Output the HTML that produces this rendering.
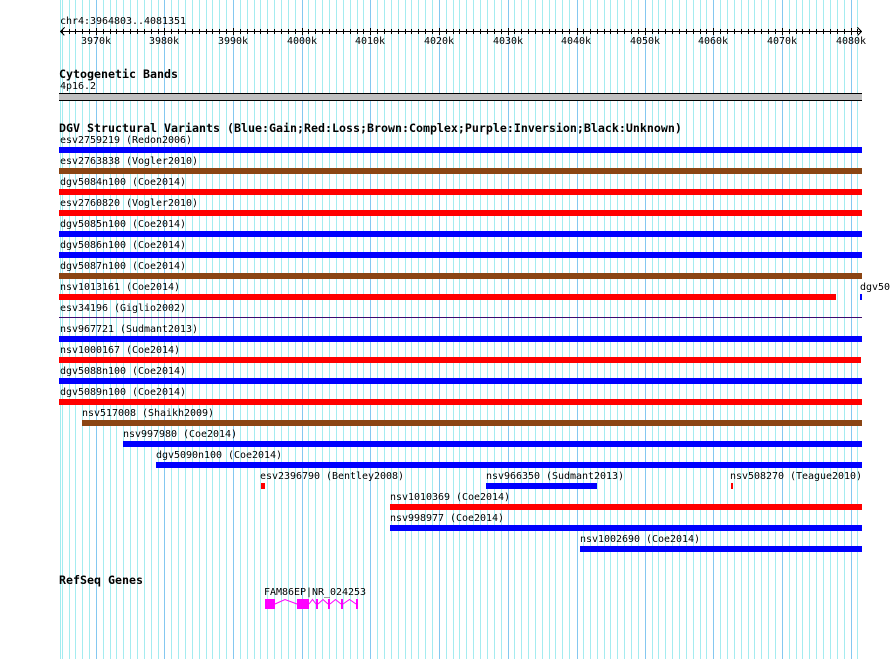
<!DOCTYPE html>
<html>
<head>
<meta charset="utf-8">
<style>
html,body{margin:0;padding:0;background:#fff}
#p{position:relative;width:890px;height:659px;overflow:hidden;background:#fff}
svg{position:absolute;left:0;top:0}
.t,.b{position:absolute;white-space:pre;color:#000;font-family:"DejaVu Sans Mono","Liberation Mono",monospace}
.t{font-size:10px;line-height:12px;height:12px;letter-spacing:-0.02px}
.b{font-size:11.63px;line-height:13px;height:13px;font-weight:bold}
.r{position:absolute;height:6px}
.u{background:#00f}.e{background:#f00}.o{background:#8b4513}
</style>
</head>
<body>
<div id="p">
<svg width="890" height="659" viewBox="0 0 890 659" shape-rendering="crispEdges" fill="none">
<defs>
<path id="m" d="M62 0V659M69 0V659M75 0V659M82 0V659M89 0V659M103 0V659M110 0V659M116 0V659M123 0V659M130 0V659M137 0V659M144 0V659M151 0V659M158 0V659M171 0V659M178 0V659M185 0V659M192 0V659M199 0V659M206 0V659M212 0V659M219 0V659M226 0V659M240 0V659M247 0V659M254 0V659M260 0V659M267 0V659M274 0V659M281 0V659M288 0V659M295 0V659M308 0V659M315 0V659M322 0V659M329 0V659M336 0V659M343 0V659M350 0V659M357 0V659M363 0V659M377 0V659M384 0V659M391 0V659M398 0V659M405 0V659M411 0V659M418 0V659M425 0V659M432 0V659M446 0V659M453 0V659M459 0V659M466 0V659M473 0V659M480 0V659M487 0V659M494 0V659M501 0V659M514 0V659M521 0V659M528 0V659M535 0V659M542 0V659M549 0V659M555 0V659M562 0V659M569 0V659M583 0V659M590 0V659M597 0V659M604 0V659M610 0V659M617 0V659M624 0V659M631 0V659M638 0V659M652 0V659M658 0V659M665 0V659M672 0V659M679 0V659M686 0V659M693 0V659M700 0V659M706 0V659M720 0V659M727 0V659M734 0V659M741 0V659M748 0V659M754 0V659M761 0V659M768 0V659M775 0V659M789 0V659M796 0V659M802 0V659M809 0V659M816 0V659M823 0V659M830 0V659M837 0V659M844 0V659M857 0V659"/>
<path id="j" d="M96 0V659M164 0V659M233 0V659M302 0V659M370 0V659M439 0V659M508 0V659M577 0V659M645 0V659M713 0V659M782 0V659M851 0V659"/>
<clipPath id="c"><rect x="0" y="29" width="890" height="5"/></clipPath>
<clipPath id="d"><rect x="0" y="28" width="890" height="7"/></clipPath>
</defs>
<g transform="translate(.5 0)">
<path d="M60 0V659" stroke="#a4ecf0"/>
<use href="#m" stroke="#a4ecf0"/>
<use href="#j" stroke="#84c8f0"/>
<g clip-path="url(#c)"><use href="#m" stroke="#000"/></g>
<g clip-path="url(#d)"><use href="#j" stroke="#000"/></g>
</g>
<path d="M60 31.5H861" stroke="#000"/>
<path d="M64.5 27.5L60.5 31.5L64.5 35.5M857.5 27.5L861.5 31.5L857.5 35.5" stroke="#000"/>
<rect x="59" y="93.5" width="803" height="7" fill="#c0c0c0" stroke="none"/>
<path d="M59 93.5H862M59 100.5H862" stroke="#000"/>
<path d="M59 317.5H862" stroke="#3c0a70"/>
</svg>

<div class="t" style="left:60px;top:16px">chr4:3964803..4081351</div>
<div class="t" style="left:81px;top:36px">3970k</div>
<div class="t" style="left:149px;top:36px">3980k</div>
<div class="t" style="left:218px;top:36px">3990k</div>
<div class="t" style="left:287px;top:36px">4000k</div>
<div class="t" style="left:355px;top:36px">4010k</div>
<div class="t" style="left:424px;top:36px">4020k</div>
<div class="t" style="left:493px;top:36px">4030k</div>
<div class="t" style="left:561px;top:36px">4040k</div>
<div class="t" style="left:630px;top:36px">4050k</div>
<div class="t" style="left:698px;top:36px">4060k</div>
<div class="t" style="left:767px;top:36px">4070k</div>
<div class="t" style="left:836px;top:36px">4080k</div>

<div class="b" style="left:59px;top:68px">Cytogenetic Bands</div>
<div class="t" style="left:60px;top:81px">4p16.2</div>

<div class="b" style="left:59px;top:122px">DGV Structural Variants (Blue:Gain;Red:Loss;Brown:Complex;Purple:Inversion;Black:Unknown)</div>

<div class="t" style="left:60px;top:135px">esv2759219 (Redon2006)</div><div class="r u" style="left:59px;top:147px;width:803px"></div>
<div class="t" style="left:60px;top:156px">esv2763838 (Vogler2010)</div><div class="r o" style="left:59px;top:168px;width:803px"></div>
<div class="t" style="left:60px;top:177px">dgv5084n100 (Coe2014)</div><div class="r e" style="left:59px;top:189px;width:803px"></div>
<div class="t" style="left:60px;top:198px">esv2760820 (Vogler2010)</div><div class="r e" style="left:59px;top:210px;width:803px"></div>
<div class="t" style="left:60px;top:219px">dgv5085n100 (Coe2014)</div><div class="r u" style="left:59px;top:231px;width:803px"></div>
<div class="t" style="left:60px;top:240px">dgv5086n100 (Coe2014)</div><div class="r u" style="left:59px;top:252px;width:803px"></div>
<div class="t" style="left:60px;top:261px">dgv5087n100 (Coe2014)</div><div class="r o" style="left:59px;top:273px;width:803px"></div>
<div class="t" style="left:60px;top:282px">nsv1013161 (Coe2014)</div><div class="r e" style="left:59px;top:294px;width:777px"></div>
<div class="t" style="left:860px;top:282px">dgv50</div><div class="r u" style="left:860px;top:294px;width:2px"></div>
<div class="t" style="left:60px;top:303px">esv34196 (Giglio2002)</div>
<div class="t" style="left:60px;top:324px">nsv967721 (Sudmant2013)</div><div class="r u" style="left:59px;top:336px;width:803px"></div>
<div class="t" style="left:60px;top:345px">nsv1000167 (Coe2014)</div><div class="r e" style="left:59px;top:357px;width:802px"></div>
<div class="t" style="left:60px;top:366px">dgv5088n100 (Coe2014)</div><div class="r u" style="left:59px;top:378px;width:803px"></div>
<div class="t" style="left:60px;top:387px">dgv5089n100 (Coe2014)</div><div class="r e" style="left:59px;top:399px;width:803px"></div>
<div class="t" style="left:82px;top:408px">nsv517008 (Shaikh2009)</div><div class="r o" style="left:82px;top:420px;width:780px"></div>
<div class="t" style="left:123px;top:429px">nsv997980 (Coe2014)</div><div class="r u" style="left:123px;top:441px;width:739px"></div>
<div class="t" style="left:156px;top:450px">dgv5090n100 (Coe2014)</div><div class="r u" style="left:156px;top:462px;width:706px"></div>
<div class="t" style="left:260px;top:471px">esv2396790 (Bentley2008)</div><div class="r e" style="left:261px;top:483px;width:4px"></div>
<div class="t" style="left:486px;top:471px">nsv966350 (Sudmant2013)</div><div class="r u" style="left:486px;top:483px;width:111px"></div>
<div class="t" style="left:730px;top:471px">nsv508270 (Teague2010)</div><div class="r e" style="left:731px;top:483px;width:2px"></div>
<div class="t" style="left:390px;top:492px">nsv1010369 (Coe2014)</div><div class="r e" style="left:390px;top:504px;width:472px"></div>
<div class="t" style="left:390px;top:513px">nsv998977 (Coe2014)</div><div class="r u" style="left:390px;top:525px;width:472px"></div>
<div class="t" style="left:580px;top:534px">nsv1002690 (Coe2014)</div><div class="r u" style="left:580px;top:546px;width:282px"></div>

<div class="b" style="left:59px;top:574px">RefSeq Genes</div>
<div class="t" style="left:264px;top:587px">FAM86EP|NR_024253</div>

<svg width="890" height="659" viewBox="0 0 890 659" fill="none">
<g fill="#f0f" shape-rendering="crispEdges">
<rect x="265" y="599" width="10" height="10"/>
<rect x="297" y="599" width="12" height="10"/>
<rect x="316" y="599" width="2" height="10"/>
<rect x="328" y="599" width="2" height="10"/>
<rect x="341" y="599" width="2" height="10"/>
<rect x="356" y="599" width="2" height="10"/>
</g>
<path d="M275 604L285 599.5L297 604M309 604L312.5 599.5L316 604M318 604L323 599.5L328 604M330 604L335.5 599.5L341 604M343 604L349.5 599.5L356 604" stroke="#f0f" stroke-width="1"/>
</svg>
</div>
</body>
</html>
